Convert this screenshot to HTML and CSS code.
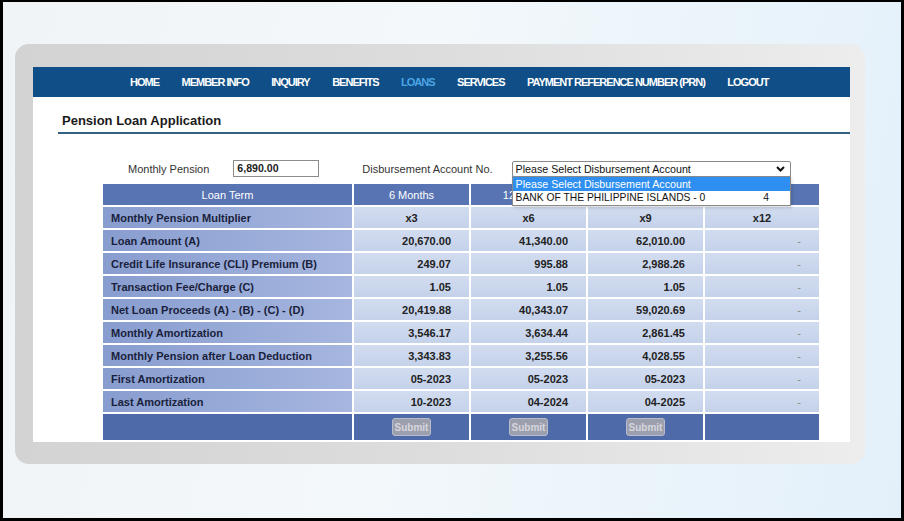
FILE: index.html
```html
<!DOCTYPE html>
<html lang="en">
<head>
<meta charset="utf-8">
<title>Pension Loan Application</title>
<link rel="stylesheet" href="styles.css">
</head>
<body>
<div class="screen">
  <div class="card">
    <div class="page">
      <nav class="nav">
        <a class="nav-item">HOME</a>
        <a class="nav-item">MEMBER INFO</a>
        <a class="nav-item">INQUIRY</a>
        <a class="nav-item">BENEFITS</a>
        <a class="nav-item active">LOANS</a>
        <a class="nav-item">SERVICES</a>
        <a class="nav-item">PAYMENT REFERENCE NUMBER (PRN)</a>
        <a class="nav-item">LOGOUT</a>
      </nav>
      <h1 class="title">Pension Loan Application</h1>
      <div class="form-row">
        <span class="field-label">Monthly Pension</span>
        <span class="input">6,890.00</span>
        <span class="field-label account-label">Disbursement Account No.</span>
        <div class="select-wrap">
          <div class="select">
            <span>Please Select Disbursement Account</span>
            <svg class="chevron" width="9" height="6" viewBox="0 0 9 6"><path d="M1 1 L4.5 4.5 L8 1" fill="none" stroke="#111" stroke-width="2"/></svg>
          </div>
          <ul class="options">
            <li class="option selected">Please Select Disbursement Account</li>
            <li class="option bank"><span>BANK OF THE PHILIPPINE ISLANDS - 0</span><span class="tail">4</span></li>
          </ul>
        </div>
      </div>
      <div class="grid">
        <div class="head">Loan Term</div>
        <div class="head">6 Months</div>
        <div class="head">12 Months</div>
        <div class="head">18 Months</div>
        <div class="head">24 Months</div>

        <div class="label">Monthly Pension Multiplier</div>
        <div class="val center">x3</div>
        <div class="val center">x6</div>
        <div class="val center">x9</div>
        <div class="val center">x12</div>

        <div class="label">Loan Amount (A)</div>
        <div class="val">20,670.00</div>
        <div class="val">41,340.00</div>
        <div class="val">62,010.00</div>
        <div class="val dash">-</div>

        <div class="label">Credit Life Insurance (CLI) Premium (B)</div>
        <div class="val">249.07</div>
        <div class="val">995.88</div>
        <div class="val">2,988.26</div>
        <div class="val dash">-</div>

        <div class="label">Transaction Fee/Charge (C)</div>
        <div class="val">1.05</div>
        <div class="val">1.05</div>
        <div class="val">1.05</div>
        <div class="val dash">-</div>

        <div class="label">Net Loan Proceeds (A) - (B) - (C) - (D)</div>
        <div class="val">20,419.88</div>
        <div class="val">40,343.07</div>
        <div class="val">59,020.69</div>
        <div class="val dash">-</div>

        <div class="label">Monthly Amortization</div>
        <div class="val">3,546.17</div>
        <div class="val">3,634.44</div>
        <div class="val">2,861.45</div>
        <div class="val dash">-</div>

        <div class="label">Monthly Pension after Loan Deduction</div>
        <div class="val">3,343.83</div>
        <div class="val">3,255.56</div>
        <div class="val">4,028.55</div>
        <div class="val dash">-</div>

        <div class="label">First Amortization</div>
        <div class="val">05-2023</div>
        <div class="val">05-2023</div>
        <div class="val">05-2023</div>
        <div class="val dash">-</div>

        <div class="label">Last Amortization</div>
        <div class="val">10-2023</div>
        <div class="val">04-2024</div>
        <div class="val">04-2025</div>
        <div class="val dash">-</div>

        <div class="foot"></div>
        <div class="foot"><button class="submit" disabled>Submit</button></div>
        <div class="foot"><button class="submit" disabled>Submit</button></div>
        <div class="foot"><button class="submit" disabled>Submit</button></div>
        <div class="foot"></div>
      </div>
    </div>
  </div>
</div>
</body>
</html>
```
FILE: styles.css
```css
* { box-sizing: border-box; }
html, body { margin: 0; padding: 0; }
body {
  width: 904px;
  height: 521px;
  overflow: hidden;
  font-family: "Liberation Sans", Arial, sans-serif;
  background: #000;
}
.screen {
  width: 904px;
  height: 521px;
  border-style: solid;
  border-color: #000;
  border-width: 2px 3px 3px 3px;
  background: linear-gradient(100deg, #f1f4f7 0%, #f3f8fb 45%, #e3f0fa 100%);
  padding: 42px 0 0 12px;
}
.card {
  width: 850px;
  height: 420px;
  border-radius: 14px;
  background: linear-gradient(90deg, #d3d3d3 0%, #dddddd 50%, #ededed 100%);
  padding: 23px 15px 22px 18px;
}
.page {
  width: 817px;
  height: 375px;
  background: #fff;
  overflow: hidden;
}
.nav {
  height: 30px;
  background: #0f4e86;
  display: flex;
  align-items: center;
  gap: 22.5px;
  padding-left: 97px;
}
.nav-item {
  color: #fff;
  font-size: 11px;
  font-weight: bold;
  letter-spacing: -1px;
  white-space: nowrap;
}
.nav-item.active { color: #4ba5e6; }
.title {
  margin: 16px 0 0 25px;
  padding: 0 0 3px 4px;
  font-size: 13px;
  line-height: 16px;
  font-weight: bold;
  color: #1a1a1a;
  border-bottom: 2px solid #34607f;
}
.form-row {
  margin-top: 26px;
  height: 17px;
  display: flex;
  align-items: center;
  padding-left: 95px;
  font-size: 11px;
  color: #333;
}
.field-label { white-space: nowrap; }
.input {
  margin-left: 24px;
  width: 86px;
  height: 17px;
  border: 1px solid #8c8c8c;
  padding-left: 3px;
  font-size: 10.6px;
  font-weight: bold;
  line-height: 15px;
  color: #222;
}
.account-label { margin-left: 43px; }
.select-wrap {
  position: relative;
  margin-left: 19px;
  width: 279px;
}
.select {
  height: 16px;
  border: 1px solid #8a8a8a;
  border-radius: 2px;
  display: flex;
  align-items: center;
  justify-content: space-between;
  padding: 0 5px 0 3px;
  font-size: 10.7px;
  color: #111;
  background: #fff;
}
.chevron { display: block; }
.options {
  position: absolute;
  top: 15px;
  left: 0;
  width: 279px;
  margin: 0;
  padding: 0;
  list-style: none;
  background: #fff;
  border: 1px solid #8a8a8a;
  box-shadow: 1px 2px 3px rgba(0,0,0,0.15);
  z-index: 2;
}
.option {
  height: 14px;
  line-height: 14px;
  font-size: 10.7px;
  color: #111;
  padding-left: 3px;
  display: flex;
  white-space: nowrap;
}
.option.bank { font-size: 10.3px; }
.option.selected { background: #2f8ff0; color: #fff; }
.option .tail { margin-left: 58px; }
.grid {
  margin: 7px 0 0 70px;
  display: grid;
  grid-template-columns: 249px 115px 115px 115px 114px;
  grid-template-rows: repeat(10, 21px) 26px;
  gap: 2px;
  font-size: 11px;
}
.head {
  background: #5874b2;
  color: #fff;
  display: flex;
  align-items: center;
  justify-content: center;
}
.label {
  background: linear-gradient(90deg, #889dcf 0%, #a6b6df 100%);
  color: #1a1f3c;
  font-weight: bold;
  display: flex;
  align-items: center;
  padding-left: 8px;
  white-space: nowrap;
}
.val {
  background: linear-gradient(180deg, #d2dcf0 0%, #c4d2ea 100%);
  color: #222;
  font-weight: bold;
  display: flex;
  align-items: center;
  justify-content: flex-end;
  padding-right: 18px;
}
.val.center { justify-content: center; padding-right: 0; }
.val.dash { color: #8a8a8a; font-weight: normal; padding-right: 18px; }
.foot {
  background: #4f6aa9;
  display: flex;
  align-items: center;
  justify-content: center;
}
.submit {
  width: 39px;
  height: 18px;
  padding: 0;
  border: 1px solid #b9bccb;
  border-radius: 3px;
  background: #9c9fae;
  color: #d6d6dc;
  font-family: "Liberation Sans", Arial, sans-serif;
  font-size: 10px;
  font-weight: bold;
}
```
